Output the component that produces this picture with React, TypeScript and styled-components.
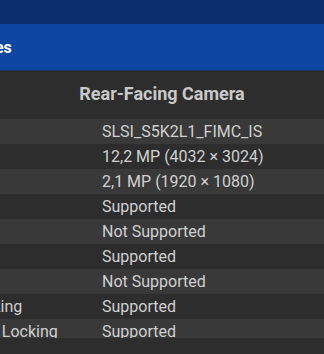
import React from "react";
import styled, { createGlobalStyle } from "styled-components";

const GlobalStyle = createGlobalStyle`
  html, body {
    margin: 0;
    padding: 0;
    background: #2d2d2d;
    overflow: hidden;
  }
  body {
    font-family: Roboto, "Liberation Sans", sans-serif;
  }
`;

const Screen = styled.div`
  width: 324px;
  height: 354px;
  display: flex;
  flex-direction: column;
  overflow: hidden;
  background: #2d2d2d;
`;

const StatusBar = styled.div`
  height: 24px;
  flex: none;
  background: #0a2d6c;
`;

const Toolbar = styled.div`
  height: 46px;
  flex: none;
  display: flex;
  align-items: center;
  background: #0d47a1;
  border-bottom: 1px solid #1a3560;
`;

const Title = styled.div`
  margin-left: -51px;
  margin-top: 0;
  color: #ffffff;
  font-size: 16px;
  font-weight: 700;
  white-space: nowrap;
`;

const List = styled.div`
  height: 267px;
  flex: none;
  overflow: hidden;
`;

const Header = styled.div`
  height: 48px;
  padding-bottom: 3px;
  box-sizing: border-box;
  display: flex;
  align-items: center;
  justify-content: center;
  color: #c9c9c9;
  font-size: 18px;
  font-weight: 700;
`;

const Table = styled.div`
  margin-left: -141px;
  width: 465px;
`;

const Row = styled.div<{ $alt: boolean }>`
  height: 25px;
  display: grid;
  grid-template-columns: 243px 1fr;
  align-items: center;
  background: ${({ $alt }) => ($alt ? "#393939" : "#2d2d2d")};
  color: #d0d0d0;
  font-size: 16px;
  white-space: nowrap;
`;

const Label = styled.div`
  overflow: hidden;
`;

const Value = styled.div``;

const rows: [string, string][] = [
  ["Camera Sensor", "SLSI_S5K2L1_FIMC_IS"],
  ["Resolution", "12,2 MP (4032 × 3024)"],
  ["Video", "2,1 MP (1920 × 1080)"],
  ["Flash", "Supported"],
  ["Zoom", "Not Supported"],
  ["Autofocus", "Supported"],
  ["Stabilization", "Not Supported"],
  ["Auto Exposure Locking", "Supported"],
  ["Auto White Balance Locking", "Supported"],
];

export default function App() {
  return (
    <Screen>
      <GlobalStyle />
      <StatusBar />
      <Toolbar>
        <Title>Features</Title>
      </Toolbar>
      <List>
        <Header>Rear-Facing Camera</Header>
        <Table>
          {rows.map(([label, value], i) => (
            <Row key={label} $alt={i % 2 === 0}>
              <Label>{label}</Label>
              <Value>{value}</Value>
            </Row>
          ))}
        </Table>
      </List>
    </Screen>
  );
}
